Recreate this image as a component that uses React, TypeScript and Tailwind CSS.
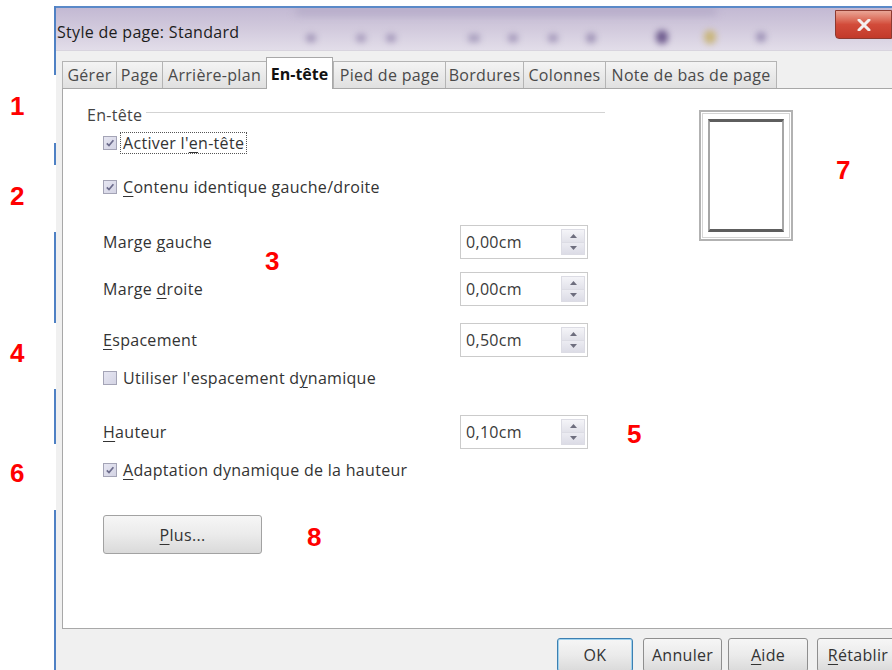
import React from "react";

type TabDef = { label: string; cls: string; active?: boolean };

const tabs: TabDef[] = [
  { label: "Gérer", cls: "w-[54px]" },
  { label: "Page", cls: "w-[46px]" },
  { label: "Arrière-plan", cls: "w-[104px]" },
  { label: "En-tête", cls: "w-[67px]", active: true },
  { label: "Pied de page", cls: "w-[112px]" },
  { label: "Bordures", cls: "w-[78px]" },
  { label: "Colonnes", cls: "w-[82px]" },
  { label: "Note de bas de page", cls: "w-[172px]" },
];

function U({ children }: { children: React.ReactNode }) {
  return <span className="underline decoration-1 underline-offset-[3px]">{children}</span>;
}

function Check({ checked }: { checked: boolean }) {
  return (
    <span className="w-[14px] h-[14px] shrink-0 border border-[#a4a4b6] bg-gradient-to-br from-[#e6e6f2] to-[#d4d4e4] flex items-center justify-center">
      {checked && (
        <svg width="10" height="10" viewBox="0 0 10 10">
          <path d="M1.8 5.4 L4 7.6 L8.4 2.2" stroke="#6c6c8c" strokeWidth="1.7" fill="none" />
        </svg>
      )}
    </span>
  );
}

function Spin({ value }: { value: string }) {
  return (
    <div className="w-[128px] h-[34px] border border-[#cbcbcb] bg-white flex items-stretch shrink-0">
      <div className="flex-1 flex items-center pl-[5px] text-[#3a3a3a]">{value}</div>
      <div className="w-[24px] my-[3px] mr-[2px] flex flex-col">
        <div className="flex-1 flex items-center justify-center bg-gradient-to-b from-[#f4f4f8] to-[#e2e2ea] border border-[#dcdce4]">
          <svg width="7" height="4" viewBox="0 0 7 4">
            <path d="M0 4 L3.5 0 L7 4 Z" fill="#6e6e7e" />
          </svg>
        </div>
        <div className="flex-1 flex items-center justify-center bg-gradient-to-b from-[#ececf2] to-[#dcdce6] border border-t-0 border-[#dcdce4]">
          <svg width="7" height="4" viewBox="0 0 7 4">
            <path d="M0 0 L3.5 4 L7 0 Z" fill="#6e6e7e" />
          </svg>
        </div>
      </div>
    </div>
  );
}

function CheckRow({ checked, children, mt, focus }: { checked: boolean; children: React.ReactNode; mt: string; focus?: boolean }) {
  return (
    <div className={`${mt} h-[24px] flex items-center pl-[40px]`}>
      <Check checked={checked} />
      <span className={`ml-[3px] px-[2px] leading-[20px] ${focus ? "border border-dotted border-[#555]" : "border border-transparent"}`}>
        {children}
      </span>
    </div>
  );
}

function FieldRow({ label, value, mt }: { label: React.ReactNode; value: string; mt: string }) {
  return (
    <div className={`${mt} h-[34px] flex items-center pl-[40px]`}>
      <div className="w-[357px] shrink-0">{label}</div>
      <Spin value={value} />
    </div>
  );
}

function DlgButton({ children, cls }: { children: React.ReactNode; cls: string }) {
  return (
    <div className={`${cls} h-[34px] shrink-0 rounded-[3px] border bg-gradient-to-b from-[#f6f6f6] via-[#ebebeb] to-[#dadada] flex items-center justify-center text-[#333]`}>
      {children}
    </div>
  );
}

export default function App() {
  return (
    <div className="relative w-[892px] h-[670px] overflow-hidden bg-white flex font-['Open_Sans',sans-serif] text-[16px] tracking-[0.3px] text-[#333]">
      {/* margin column */}
      <div className="w-[54px] shrink-0" />

      {/* window frame edge */}
      <div className="w-[2px] shrink-0 pt-[6px] flex flex-col">
        <div className="h-[69px] bg-[#4f81c4]" />
        <div className="h-[68px]" />
        <div className="h-[22px] bg-[#4f81c4]" />
        <div className="h-[67px]" />
        <div className="h-[91px] bg-[#4f81c4]" />
        <div className="h-[66px]" />
        <div className="h-[55px] bg-[#4f81c4]" />
        <div className="h-[66px]" />
        <div className="flex-1 bg-[#4f81c4]" />
      </div>

      {/* dialog */}
      <div className="w-[836px] shrink-0 mt-[6px] flex flex-col border-t-2 border-[#5a89c8]">
        {/* title bar */}
        <div className="relative h-[42px] shrink-0 overflow-hidden bg-gradient-to-b from-[#c3b9d3] via-[#d2cadd] to-[#e2dde9] flex items-start justify-between">
          <div className="absolute left-[250px] top-[26px] w-[10px] h-[8px] rounded-full bg-[#9f93b6] blur-[3px]" />
          <div className="absolute left-[300px] top-[26px] w-[10px] h-[8px] rounded-full bg-[#a498ba] blur-[3px]" />
          <div className="absolute left-[330px] top-[26px] w-[10px] h-[8px] rounded-full bg-[#a195b8] blur-[3px]" />
          <div className="absolute left-[412px] top-[26px] w-[12px] h-[8px] rounded-full bg-[#a69cbc] blur-[3px]" />
          <div className="absolute left-[452px] top-[26px] w-[10px] h-[8px] rounded-full bg-[#a195b8] blur-[3px]" />
          <div className="absolute left-[492px] top-[26px] w-[10px] h-[8px] rounded-full bg-[#a195b8] blur-[3px]" />
          <div className="absolute left-[530px] top-[25px] w-[10px] h-[10px] rounded-full bg-[#9c90b4] blur-[3px]" />
          <div className="absolute left-[600px] top-[22px] w-[12px] h-[14px] rounded-full bg-[#6d5a8d] blur-[3px]" />
          <div className="absolute left-[648px] top-[22px] w-[12px] h-[14px] rounded-full bg-[#c9b57a] blur-[3px]" />
          <div className="absolute left-[700px] top-[24px] w-[10px] h-[10px] rounded-full bg-[#9a8eb4] blur-[3px]" />
          <div className="absolute left-[240px] top-[0px] w-[420px] h-[6px] bg-[#b0a6c4] blur-[4px]" />
          <span className="relative mt-[12px] ml-[1px] text-[16px] text-[#1c1c1c] tracking-[0.3px]">Style de page: Standard</span>
          <div className="relative mt-[2px] w-[57px] h-[29px] rounded-bl-[4px] bg-gradient-to-b from-[#e9a596] via-[#d24b3a] to-[#c23a2a] border border-[#8d3a30] flex items-center justify-center">
            <svg width="14" height="12" viewBox="0 0 14 12">
              <path d="M2 1 L12 11 M12 1 L2 11" stroke="#f4f0f0" strokeWidth="3" strokeLinecap="round" />
            </svg>
          </div>
        </div>

        {/* client area */}
        <div className="flex-1 bg-[#f0f0f0] border-t border-[#d8d4de] pl-[6px] flex flex-col">
          {/* tab strip */}
          <div className="h-[31px] mt-[6px] flex items-end shrink-0">
            {tabs.map((t) =>
              t.active ? (
                <div
                  key={t.label}
                  className={`${t.cls} h-[32px] mb-[-1px] relative z-10 bg-white border border-b-0 border-[#a8a8a8] flex items-center justify-center font-bold text-[#111] tracking-normal`}
                >
                  {t.label}
                </div>
              ) : (
                <div
                  key={t.label}
                  className={`${t.cls} h-[27px] border border-b-0 border-r-0 border-[#b4b4b4] bg-gradient-to-b from-[#f4f4f4] to-[#e0e0e0] flex items-center justify-center text-[#4a4a4a] last:border-r`}
                >
                  {t.label}
                </div>
              )
            )}
          </div>

          {/* tab page */}
          <div className="h-[541px] shrink-0 bg-white border-t border-l border-b border-[#a8a8a8] flex">
            <div className="w-[560px] shrink-0 flex flex-col pt-[16px]">
              <div className="h-[20px] flex items-center pl-[24px] w-[542px]">
                <span className="text-[#444]">En-tête</span>
                <div className="flex-1 ml-[4px] mt-[-5px] h-[2px] border-t border-[#d3d3d3] border-b border-b-white" />
              </div>
              <CheckRow checked mt="mt-[6px]" focus>
                Activer l'<U>e</U>n-tête
              </CheckRow>
              <CheckRow checked mt="mt-[20px]">
                <U>C</U>ontenu identique gauche/droite
              </CheckRow>
              <FieldRow mt="mt-[26px]" value="0,00cm" label={<>Marge <U>g</U>auche</>} />
              <FieldRow mt="mt-[13px]" value="0,00cm" label={<>Marge <U>d</U>roite</>} />
              <FieldRow mt="mt-[17px]" value="0,50cm" label={<><U>E</U>spacement</>} />
              <CheckRow checked={false} mt="mt-[9px]">
                Utiliser l'espacement d<U>y</U>namique
              </CheckRow>
              <FieldRow mt="mt-[25px]" value="0,10cm" label={<><U>H</U>auteur</>} />
              <CheckRow checked mt="mt-[9px]">
                <U>A</U>daptation dynamique de la hauteur
              </CheckRow>
              <div className="mt-[33px] pl-[40px]">
                <DlgButton cls="w-[159px] h-[39px] border-[#a2a2a2]">
                  <U>P</U>lus...
                </DlgButton>
              </div>
            </div>

            {/* page preview */}
            <div className="ml-[76px] mt-[21px] w-[94px] h-[131px] shrink-0 border-2 border-[#b2b2b2] p-[1px]">
              <div className="w-full h-full border border-[#d4d4d4] p-[5px]">
                <div className="w-full h-full border-x-2 border-y-[3px] border-x-[#a6a6a6] border-y-[#5e5e5e] bg-white" />
              </div>
            </div>
          </div>

          {/* dialog buttons */}
          <div className="flex pt-[9px] pl-[495px]">
            <DlgButton cls="w-[76px] border-[#3c7fb1] shadow-[inset_0_0_0_1px_#9fd2ee]">OK</DlgButton>
            <DlgButton cls="ml-[10px] w-[79px] border-[#8e8e8e]">Annuler</DlgButton>
            <DlgButton cls="ml-[6px] w-[80px] border-[#8e8e8e]">
              <U>A</U>ide
            </DlgButton>
            <DlgButton cls="ml-[9px] w-[82px] border-[#8e8e8e]">
              <U>R</U>établir
            </DlgButton>
          </div>
        </div>
      </div>

      {/* callout numbers */}
      <div className="absolute inset-0 pointer-events-none font-['Liberation_Sans',Arial,sans-serif] font-bold text-[26px] leading-none tracking-normal text-[#ff0000]">
        <span className="absolute left-[10px] top-[93px]">1</span>
        <span className="absolute left-[10px] top-[183px]">2</span>
        <span className="absolute left-[265px] top-[248px]">3</span>
        <span className="absolute left-[10px] top-[340px]">4</span>
        <span className="absolute left-[627px] top-[421px]">5</span>
        <span className="absolute left-[10px] top-[460px]">6</span>
        <span className="absolute left-[836px] top-[157px]">7</span>
        <span className="absolute left-[307px] top-[524px]">8</span>
      </div>
    </div>
  );
}
